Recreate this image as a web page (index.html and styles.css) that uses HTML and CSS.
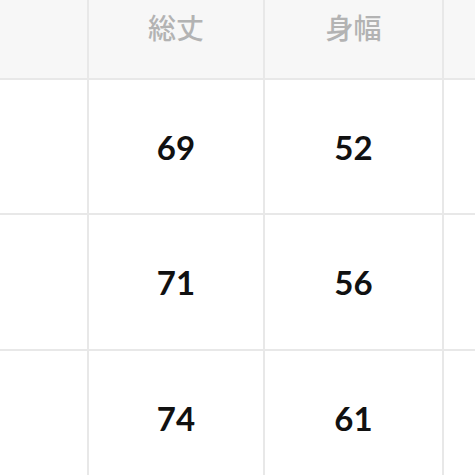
FILE: index.html
```html
<!DOCTYPE html>
<html lang="ja">
<head>
<meta charset="utf-8">
<title>サイズ表</title>
<link rel="stylesheet" href="styles.css">
</head>
<body>
<div class="size-table">
  <div class="cell head"></div>
  <div class="cell head">総丈</div>
  <div class="cell head">身幅</div>
  <div class="cell head"></div>

  <div class="cell"></div>
  <div class="cell num">69</div>
  <div class="cell num">52</div>
  <div class="cell"></div>

  <div class="cell"></div>
  <div class="cell num">71</div>
  <div class="cell num">56</div>
  <div class="cell"></div>

  <div class="cell"></div>
  <div class="cell num">74</div>
  <div class="cell num">61</div>
  <div class="cell"></div>
</div>
</body>
</html>
```
FILE: styles.css
```css
html, body {
  margin: 0;
  padding: 0;
  background: #ffffff;
  overflow: hidden;
}

.size-table {
  display: grid;
  grid-template-columns: 87px 174px 177px 1fr;
  grid-template-rows: 78px 133px 134px 134px;
  gap: 2px;
  background: #e8e8e8;
  width: 475px;
  height: 490px;
}

.cell {
  background: #ffffff;
  display: flex;
  align-items: center;
  justify-content: center;
}

.head {
  background: #f7f7f7;
  align-items: flex-start;
  padding-top: 7px;
  line-height: 40px;
  font-family: "Noto Sans CJK JP", "Noto Sans", sans-serif;
  font-weight: 500;
  font-size: 28px;
  color: #b3b3b3;
}

.num {
  font-family: "Lato", "Liberation Sans", sans-serif;
  font-weight: 700;
  font-size: 33px;
  color: #111111;
}
```
